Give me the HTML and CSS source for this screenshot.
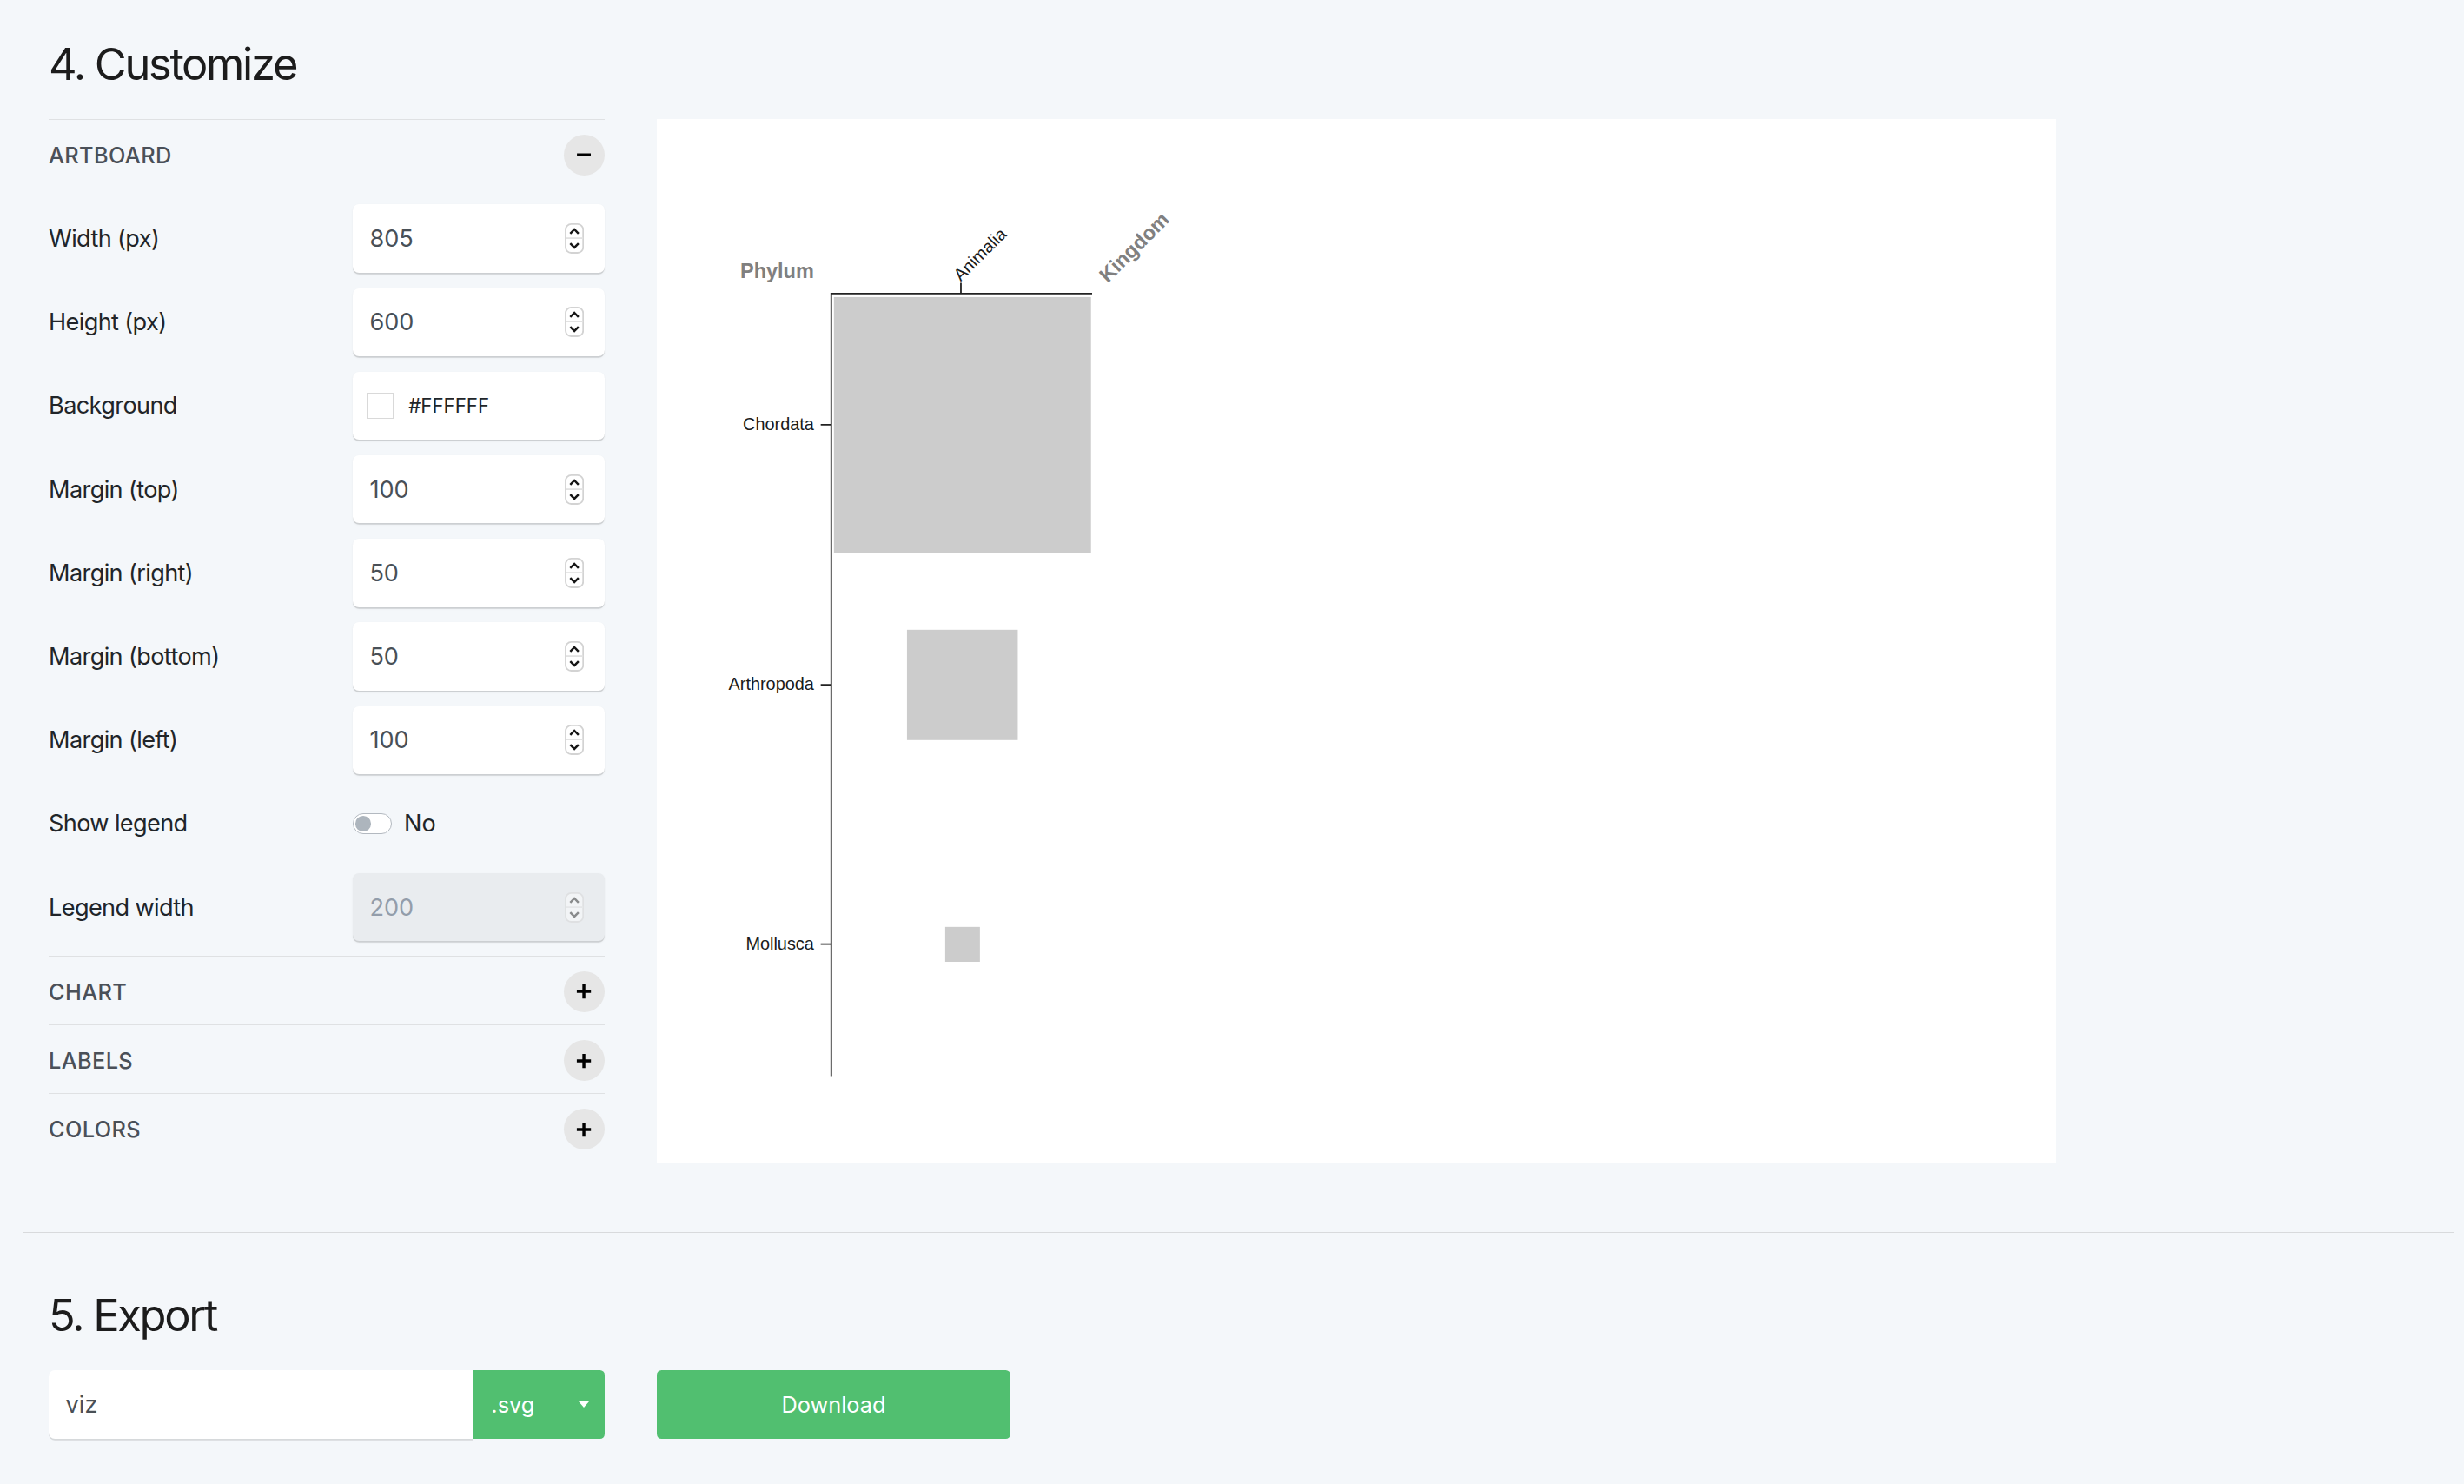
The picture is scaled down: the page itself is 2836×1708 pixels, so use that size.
FILE: index.html
```html
<!DOCTYPE html>
<html lang="en">
<head>
<meta charset="utf-8">
<title>Customize</title>
<link rel="stylesheet" href="styles.css">
</head>
<body>
<main class="page">
  <section class="step">
    <h2 class="step-title">4. Customize</h2>
    <div class="customize-row">
      <aside class="options">
        <div class="group">
          <div class="group-head">
            <span class="group-title">Artboard</span>
            <button class="circle-btn" type="button" aria-label="collapse">
              <svg width="10" height="10" viewBox="0 0 10 10"><path d="M0.6 5H9.4" stroke="#000" stroke-width="1.7"/></svg>
            </button>
          </div>
          <div class="group-body">
            <div class="field">
              <span class="field-label">Width (px)</span>
              <div class="control"><span class="value">805</span>
                <svg class="spin" viewBox="0 0 12 19"><rect x="0.5" y="0.5" width="11" height="18" rx="3.5" fill="#fff" stroke="#d3d3d3"/><path d="M0.5 9.3H11.5" stroke="#e2e2e2"/><path d="M3.4 6.4L6 3.8L8.6 6.4M3.4 12.6L6 15.2L8.6 12.6" fill="none" stroke="#161616" stroke-width="1.35"/></svg>
              </div>
            </div>
            <div class="field">
              <span class="field-label">Height (px)</span>
              <div class="control"><span class="value">600</span>
                <svg class="spin" viewBox="0 0 12 19"><rect x="0.5" y="0.5" width="11" height="18" rx="3.5" fill="#fff" stroke="#d3d3d3"/><path d="M0.5 9.3H11.5" stroke="#e2e2e2"/><path d="M3.4 6.4L6 3.8L8.6 6.4M3.4 12.6L6 15.2L8.6 12.6" fill="none" stroke="#161616" stroke-width="1.35"/></svg>
              </div>
            </div>
            <div class="field">
              <span class="field-label">Background</span>
              <div class="control control-color"><span class="swatch"></span><span class="hex">#FFFFFF</span></div>
            </div>
            <div class="field">
              <span class="field-label">Margin (top)</span>
              <div class="control"><span class="value">100</span>
                <svg class="spin" viewBox="0 0 12 19"><rect x="0.5" y="0.5" width="11" height="18" rx="3.5" fill="#fff" stroke="#d3d3d3"/><path d="M0.5 9.3H11.5" stroke="#e2e2e2"/><path d="M3.4 6.4L6 3.8L8.6 6.4M3.4 12.6L6 15.2L8.6 12.6" fill="none" stroke="#161616" stroke-width="1.35"/></svg>
              </div>
            </div>
            <div class="field">
              <span class="field-label">Margin (right)</span>
              <div class="control"><span class="value">50</span>
                <svg class="spin" viewBox="0 0 12 19"><rect x="0.5" y="0.5" width="11" height="18" rx="3.5" fill="#fff" stroke="#d3d3d3"/><path d="M0.5 9.3H11.5" stroke="#e2e2e2"/><path d="M3.4 6.4L6 3.8L8.6 6.4M3.4 12.6L6 15.2L8.6 12.6" fill="none" stroke="#161616" stroke-width="1.35"/></svg>
              </div>
            </div>
            <div class="field">
              <span class="field-label">Margin (bottom)</span>
              <div class="control"><span class="value">50</span>
                <svg class="spin" viewBox="0 0 12 19"><rect x="0.5" y="0.5" width="11" height="18" rx="3.5" fill="#fff" stroke="#d3d3d3"/><path d="M0.5 9.3H11.5" stroke="#e2e2e2"/><path d="M3.4 6.4L6 3.8L8.6 6.4M3.4 12.6L6 15.2L8.6 12.6" fill="none" stroke="#161616" stroke-width="1.35"/></svg>
              </div>
            </div>
            <div class="field">
              <span class="field-label">Margin (left)</span>
              <div class="control"><span class="value">100</span>
                <svg class="spin" viewBox="0 0 12 19"><rect x="0.5" y="0.5" width="11" height="18" rx="3.5" fill="#fff" stroke="#d3d3d3"/><path d="M0.5 9.3H11.5" stroke="#e2e2e2"/><path d="M3.4 6.4L6 3.8L8.6 6.4M3.4 12.6L6 15.2L8.6 12.6" fill="none" stroke="#161616" stroke-width="1.35"/></svg>
              </div>
            </div>
            <div class="field">
              <span class="field-label">Show legend</span>
              <div class="switch-wrap"><span class="switch"><span class="knob"></span></span><span class="switch-label">No</span></div>
            </div>
            <div class="field">
              <span class="field-label">Legend width</span>
              <div class="control control-disabled"><span class="value">200</span>
                <svg class="spin" viewBox="0 0 12 19"><rect x="0.5" y="0.5" width="11" height="18" rx="3.5" fill="#fff" stroke="#d3d3d3"/><path d="M0.5 9.3H11.5" stroke="#e2e2e2"/><path d="M3.4 6.4L6 3.8L8.6 6.4M3.4 12.6L6 15.2L8.6 12.6" fill="none" stroke="#161616" stroke-width="1.35"/></svg>
              </div>
            </div>
          </div>
        </div>
        <div class="group">
          <div class="group-head">
            <span class="group-title">Chart</span>
            <button class="circle-btn" type="button" aria-label="expand">
              <svg width="10" height="10" viewBox="0 0 10 10"><path d="M0.5 5H9.5M5 0.5V9.5" stroke="#000" stroke-width="1.9"/></svg>
            </button>
          </div>
        </div>
        <div class="group">
          <div class="group-head">
            <span class="group-title">Labels</span>
            <button class="circle-btn" type="button" aria-label="expand">
              <svg width="10" height="10" viewBox="0 0 10 10"><path d="M0.5 5H9.5M5 0.5V9.5" stroke="#000" stroke-width="1.9"/></svg>
            </button>
          </div>
        </div>
        <div class="group">
          <div class="group-head">
            <span class="group-title">Colors</span>
            <button class="circle-btn" type="button" aria-label="expand">
              <svg width="10" height="10" viewBox="0 0 10 10"><path d="M0.5 5H9.5M5 0.5V9.5" stroke="#000" stroke-width="1.9"/></svg>
            </button>
          </div>
        </div>
      </aside>
      <div class="artboard">
        <svg class="chart" width="890" height="664" viewBox="0 0 890 664">
          <g class="chart-text">
            <text x="100" y="101" text-anchor="end" class="axis-title">Phylum</text>
            <text transform="translate(287 104.6) rotate(-45)" class="axis-title">Kingdom</text>
          </g>
          <rect x="112.7" y="113.3" width="163.6" height="163.1" fill="#cccccc"/>
          <rect x="159.2" y="325" width="70.5" height="70.2" fill="#cccccc"/>
          <rect x="183.5" y="514.1" width="22.1" height="22.2" fill="#cccccc"/>
          <g class="axis" stroke="#222" stroke-width="1" fill="none">
            <path d="M111 111.1H277"/>
            <path d="M193.5 104.2V111"/>
            <path d="M111 110.6V609"/>
            <path d="M104.3 194.5H111M104.3 360H111M104.3 525H111"/>
          </g>
          <g class="chart-text">
            <text transform="translate(193.4 103.7) rotate(-45)" class="tick-label">Animalia</text>
            <text x="100" y="194.5" dy="0.32em" text-anchor="end" class="tick-label">Chordata</text>
            <text x="100" y="360" dy="0.32em" text-anchor="end" class="tick-label">Arthropoda</text>
            <text x="100" y="525" dy="0.32em" text-anchor="end" class="tick-label">Mollusca</text>
          </g>
        </svg>
      </div>
    </div>
  </section>

  <hr class="rule">

  <section class="step">
    <h2 class="step-title">5. Export</h2>
    <div class="export-row">
      <div class="file-group">
        <div class="file-input">viz</div>
        <button class="ext-btn" type="button"><span>.svg</span><span class="caret"></span></button>
      </div>
      <button class="download" type="button">Download</button>
    </div>
  </section>
</main>
</body>
</html>
```
FILE: styles.css
```css
html {
  zoom: 1.8087;
  background: #f4f7fa;
}

body {
  margin: 0;
  background: #f4f7fa;
  color: #212529;
  font-family: Inter, "Noto Sans", "Liberation Sans", sans-serif;
}

.page {
  padding: 23.5px 6px 20px 14.4px;
}

.step {
  padding-left: 16.6px;
}

.step-title {
  margin: 0 0 18.3px;
  font-size: 28px;
  font-weight: 400;
  line-height: 34px;
  letter-spacing: -1.3px;
  color: #1c1c1c;
}

.customize-row {
  display: flex;
  align-items: flex-start;
  gap: 33.4px;
}

.options {
  flex: none;
  width: 353.6px;
}

.group {
  border-top: 1px solid #dfe1e3;
}

.group-head {
  box-sizing: border-box;
  height: 43.2px;
  padding-top: 1.4px;
  display: flex;
  align-items: center;
  justify-content: space-between;
}

.group-title {
  font-size: 14px;
  font-weight: 500;
  letter-spacing: 0.2px;
  text-transform: uppercase;
  color: #4a5058;
}

.circle-btn {
  width: 26px;
  height: 26px;
  padding: 0;
  border: 0;
  border-radius: 50%;
  background: #e6e6e6;
  display: flex;
  align-items: center;
  justify-content: center;
}

.circle-btn svg {
  display: block;
}

.group-body {
  padding: 10.6px 0 9.3px;
  display: flex;
  flex-direction: column;
  gap: 9.9px;
}

.field {
  height: 43.3px;
  display: flex;
  align-items: center;
  justify-content: space-between;
}

.field-label {
  font-size: 15px;
  letter-spacing: -0.35px;
  color: #212529;
}

.control {
  box-sizing: border-box;
  width: 160px;
  height: 43.3px;
  padding: 0 12.9px 0 10.6px;
  display: flex;
  align-items: center;
  justify-content: space-between;
  background: #fff;
  border-radius: 4px;
  box-shadow: 0 1px 0 rgba(0, 0, 0, 0.12), 0 1px 1.5px rgba(0, 0, 0, 0.05);
}

.value {
  font-size: 15px;
  color: #495057;
}

.spin {
  display: block;
  width: 12.3px;
  height: 19.3px;
}

.control-color {
  justify-content: flex-start;
  padding-left: 9px;
}

.swatch {
  box-sizing: border-box;
  width: 17px;
  height: 17px;
  border: 1px solid #d9d9d9;
  background: #fff;
}

.hex {
  margin-left: 9.4px;
  font-size: 12.3px;
  color: #212529;
}

.control-disabled {
  background: #e9ecef;
}

.control-disabled .value {
  color: #939daa;
}

.control-disabled .spin {
  opacity: 0.45;
}

.switch-wrap {
  width: 160px;
  display: flex;
  align-items: center;
}

.switch {
  box-sizing: border-box;
  width: 25px;
  height: 13.2px;
  border: 1px solid #b3b9c0;
  border-radius: 7px;
  background: #fff;
  display: flex;
  align-items: center;
  padding-left: 1px;
}

.knob {
  width: 9.8px;
  height: 9.8px;
  border-radius: 50%;
  background: #adb5bd;
}

.switch-label {
  margin-left: 7.5px;
  font-size: 15px;
  color: #212529;
}

.artboard {
  flex: none;
  width: 890px;
  height: 664px;
  background: #fff;
}

.chart {
  display: block;
}

.chart-text {
  font-family: "Liberation Sans", Arial, sans-serif;
}

.axis-title {
  font-size: 13px;
  font-weight: 700;
  fill: #808080;
}

.tick-label {
  font-size: 11px;
  fill: #1a1a1a;
}

.rule {
  margin: 44px 0 35.5px;
  border: 0;
  border-top: 1px solid #d8dadc;
  height: 0;
}

.export-row {
  display: flex;
  gap: 33.2px;
  height: 43.5px;
}

.file-group {
  width: 353.8px;
  display: flex;
}

.file-input {
  flex: 1;
  display: flex;
  align-items: center;
  padding-left: 10.8px;
  background: #fff;
  border-radius: 4px 0 0 4px;
  box-shadow: 0 1px 0 rgba(0, 0, 0, 0.12);
  font-size: 15px;
  color: #495057;
}

.ext-btn {
  width: 84px;
  padding: 0 10px 0 11.8px;
  border: 0;
  border-radius: 0 3px 3px 0;
  background: #51bf70;
  color: #fff;
  font-family: inherit;
  font-size: 14px;
  display: flex;
  align-items: center;
  justify-content: space-between;
}

.caret {
  width: 0;
  height: 0;
  border-left: 3.7px solid transparent;
  border-right: 3.7px solid transparent;
  border-top: 4.2px solid #fff;
}

.download {
  width: 225px;
  border: 0;
  border-radius: 3px;
  background: #51bf70;
  color: #fff;
  font-family: inherit;
  font-size: 14px;
}
```
